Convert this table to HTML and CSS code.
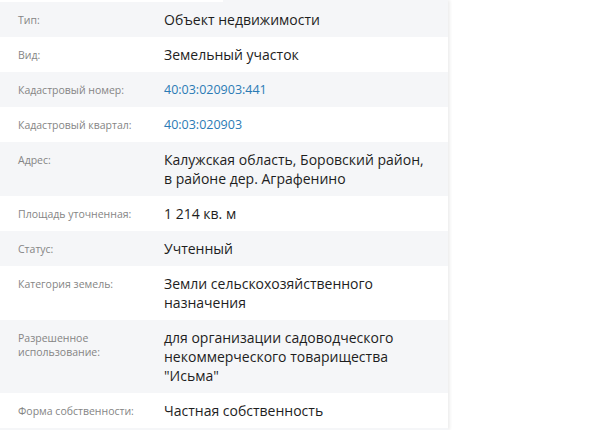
FILE: index.html
```html
<!DOCTYPE html>
<html lang="ru">
<head>
<meta charset="utf-8">
<link rel="stylesheet" href="styles.css">
</head>
<body>
<div class="panel">
  <div class="topstrip"><span class="ts-left"></span><span class="ts-right"></span></div>
  <div class="row alt"><div class="label">Тип:</div><div class="value">Объект недвижимости</div></div>
  <div class="row"><div class="label">Вид:</div><div class="value">Земельный участок</div></div>
  <div class="row alt"><div class="label">Кадастровый номер:</div><div class="value"><a class="link" href="#">40:03:020903:441</a></div></div>
  <div class="row"><div class="label">Кадастровый квартал:</div><div class="value"><a class="link" href="#">40:03:020903</a></div></div>
  <div class="row alt"><div class="label">Адрес:</div><div class="value">Калужская область, Боровский район,<br>в районе дер. Аграфенино</div></div>
  <div class="row"><div class="label">Площадь уточненная:</div><div class="value">1 214 кв. м</div></div>
  <div class="row alt"><div class="label">Статус:</div><div class="value">Учтенный</div></div>
  <div class="row"><div class="label">Категория земель:</div><div class="value">Земли сельскохозяйственного<br>назначения</div></div>
  <div class="row alt"><div class="label">Разрешенное<br>использование:</div><div class="value">для организации садоводческого<br>некоммерческого товарищества<br>"Исьма"</div></div>
  <div class="row"><div class="label">Форма собственности:</div><div class="value">Частная собственность</div></div>
  <div class="bottomstrip"></div>
</div>
</body>
</html>
```
FILE: styles.css
```css
html, body {
  margin: 0;
  padding: 0;
  background: #ffffff;
}
body {
  font-family: "Open Sans", "Noto Sans", sans-serif;
  overflow: hidden;
  height: 430px;
}
.panel {
  width: 448px;
  background: #ffffff;
  box-shadow: 2px 0 3px rgba(0, 0, 0, 0.07);
}
.topstrip {
  display: flex;
  height: 2px;
}
.ts-left {
  width: 223px;
  background: #ffffff;
}
.ts-right {
  flex: 1;
  background: #f5f6f8;
}
.row {
  display: grid;
  grid-template-columns: 164px 1fr;
  padding: 8px 0;
  background: #ffffff;
}
.row.alt {
  background: #f5f6f8;
}
.bottomstrip {
  height: 2px;
  background: #f5f6f8;
}
.label {
  padding-left: 18px;
  padding-right: 14px;
  font-size: 10.5px;
  line-height: 14px;
  padding-top: 3px;
  color: #858585;
}
.value {
  font-size: 14px;
  line-height: 19px;
  color: #1e1e1e;
  min-height: 19px;
}
.link {
  display: block;
  color: #2b7bb5;
  text-decoration: none;
  font-size: 12.5px;
  line-height: 19px;
}
```
